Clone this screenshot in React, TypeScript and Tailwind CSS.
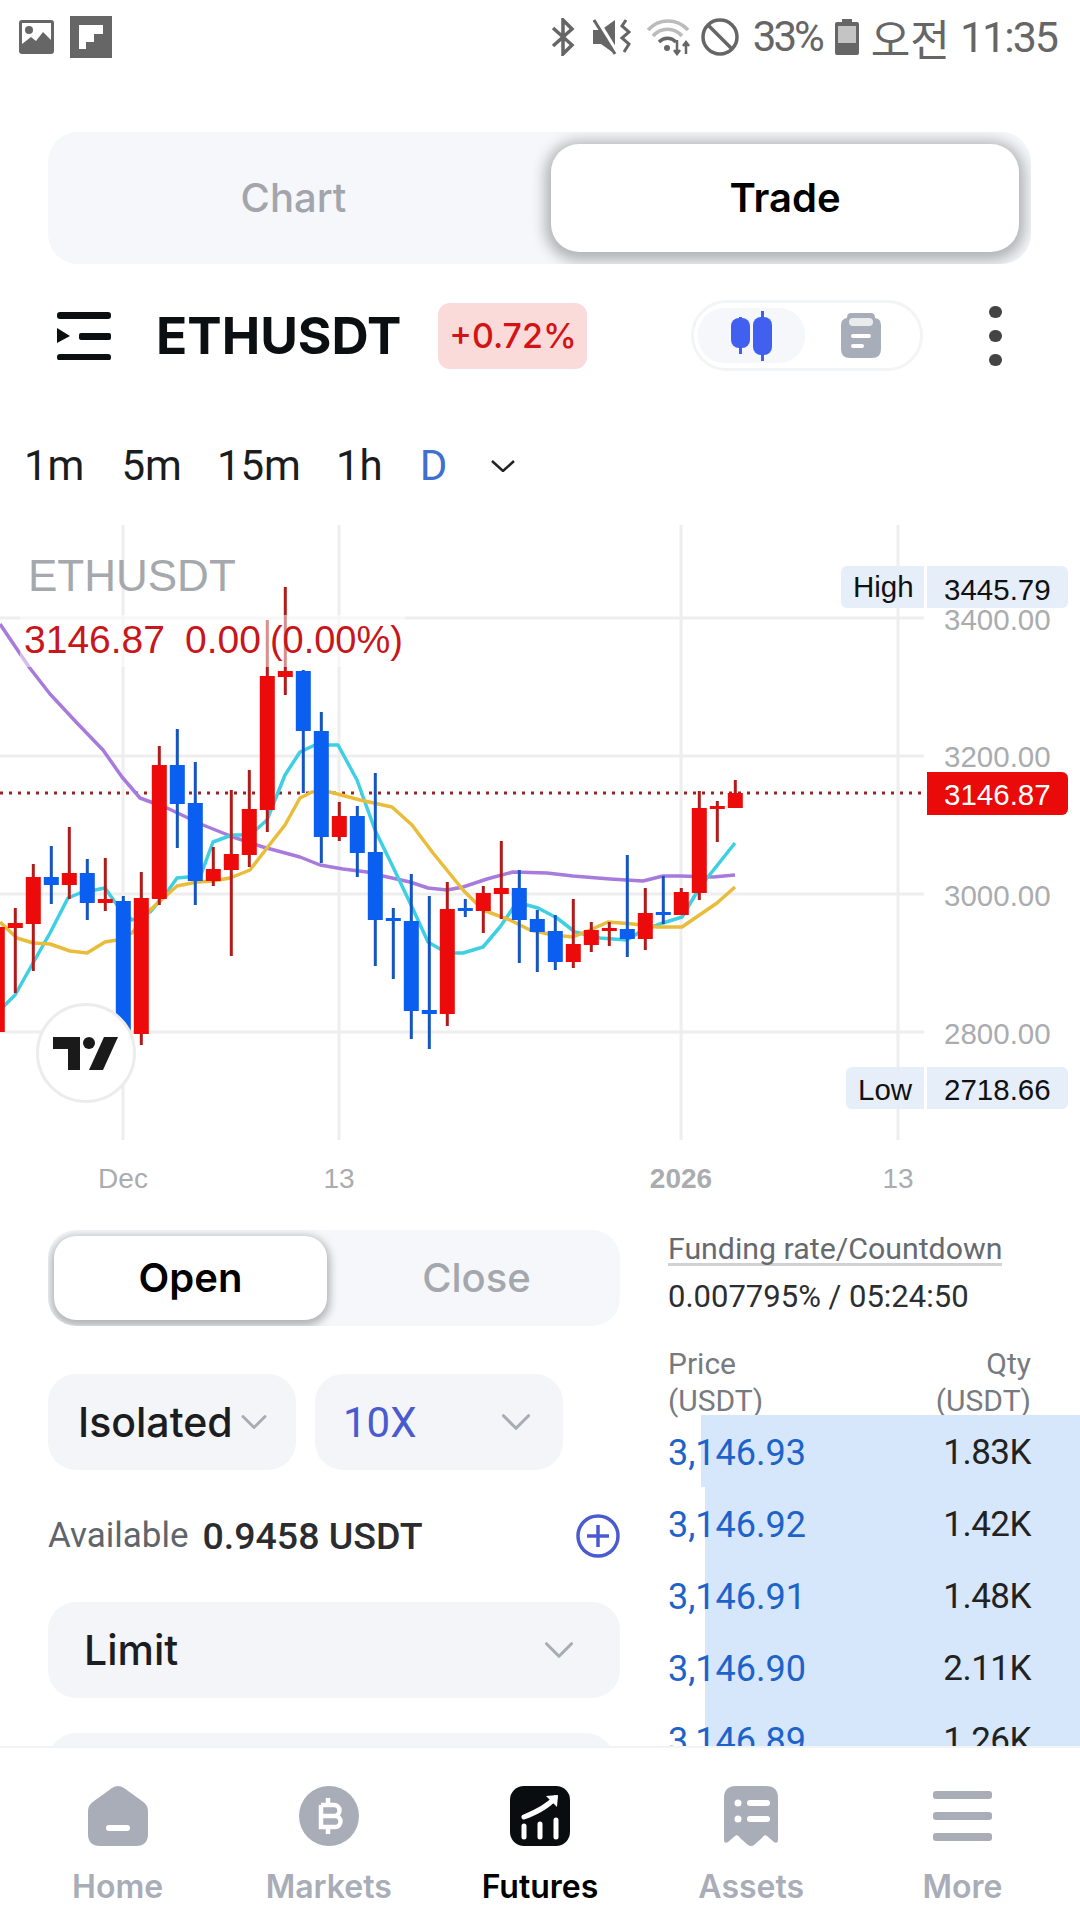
import { ChevronDown } from 'lucide-react';

// x, wickTop, wickBottom, bodyTop, bodyBottom, up
type Candle = [number, number, number, number, number, boolean];

const candles: Candle[] = [
  [-2.7, 927, 1032, 927, 1032, true],
  [15.3, 908, 993, 923, 928, true],
  [33.3, 864, 971, 877, 924, true],
  [51.3, 846, 904, 877, 885, false],
  [69.3, 827, 899, 873, 885, true],
  [87.3, 859, 920, 873, 903, false],
  [105.3, 858, 911, 899, 903, true],
  [123.3, 896, 1040, 901, 1040, false],
  [141.3, 872, 1045, 898, 1034, true],
  [159.3, 746, 905, 765, 899, true],
  [177.3, 729, 848, 765, 804, false],
  [195.3, 762, 905, 803, 881, false],
  [213.3, 847, 886, 869, 881, true],
  [231.3, 790, 956, 854, 870, true],
  [249.3, 770, 867, 809, 855, true],
  [267.3, 620, 832, 676, 810, true],
  [285.3, 587, 695, 671, 677, true],
  [303.3, 670, 793, 671, 731, false],
  [321.3, 712, 863, 731, 837, false],
  [339.3, 802, 841, 816, 837, true],
  [357.3, 806, 877, 816, 853, false],
  [375.3, 773, 966, 852, 920, false],
  [393.3, 908, 979, 918, 921, false],
  [411.3, 874, 1039, 921, 1011, false],
  [429.3, 896, 1049, 1010, 1014, false],
  [447.3, 882, 1026, 909, 1014, true],
  [465.3, 899, 917, 908, 911, false],
  [483.3, 886, 933, 893, 911, true],
  [501.3, 841, 919, 888, 894, true],
  [519.3, 870, 963, 888, 920, false],
  [537.3, 910, 972, 919, 932, false],
  [555.3, 915, 970, 931, 962, false],
  [573.3, 899, 968, 944, 962, true],
  [591.3, 922, 952, 930, 945, true],
  [609.3, 922, 946, 928, 931, true],
  [627.3, 855, 957, 929, 939, false],
  [645.3, 888, 950, 913, 939, true],
  [663.3, 876, 924, 912, 915, false],
  [681.3, 888, 915, 892, 915, true],
  [699.3, 791, 900, 808, 893, true],
  [717.3, 801, 842, 806, 809, true],
  [735.3, 780, 808, 793, 808, true],
];

const purple =
  '0,624 29,667 50,694 77,723 103,750 122,777 140,798 167,808 203,825 233,837 263,847 300,857 320,865 343,869 367,872 383,876 410,882 428,888 447,890 463,887 487,879 513,872 547,873 573,876 610,879 643,881 663,876 680,876 713,877 735,875';
const cyan =
  '0,1010 15,995 33,963 50,933 68,898 80,893 105,888 117,905 132,920 150,912 167,892 177,878 188,877 200,877 213,842 232,835 250,835 267,820 285,775 300,752 315,745 338,745 357,780 375,830 393,867 412,907 428,942 447,953 463,953 483,947 500,927 513,908 527,905 538,908 557,918 575,932 600,938 627,940 643,930 663,923 682,917 700,887 735,843';
const yellow =
  '0,922 17,938 33,943 50,944 70,951 87,953 105,942 117,940 132,933 150,910 177,886 197,882 213,881 230,878 250,870 267,848 285,825 300,798 312,792 330,792 360,800 392,807 412,825 433,853 463,890 483,910 510,920 530,930 553,935 573,937 590,930 608,922 633,924 657,927 682,927 717,903 735,887';

const asks = [
  { price: '3,146.93', qty: '1.83K', bar: 379 },
  { price: '3,146.92', qty: '1.42K', bar: 375 },
  { price: '3,146.91', qty: '1.48K', bar: 375 },
  { price: '3,146.90', qty: '2.11K', bar: 375 },
  { price: '3,146.89', qty: '1.26K', bar: 375 },
];

function StatusBar() {
  return (
    <div className="h-[74px] flex items-center justify-between pl-[19px] pr-[23px] text-[#666] font-[Roboto,sans-serif]">
      <div className="flex items-center gap-[16px]">
        <svg width="35" height="34" viewBox="0 0 35 34">
          <rect width="35" height="34" rx="3" fill="#666" />
          <rect x="3" y="3" width="29" height="28" fill="#fff" />
          <circle cx="10" cy="10" r="4" fill="#666" />
          <path d="M3 28 L3 24 L12 17 L17 21 L24 12 L32 20 L32 31 L3 31Z" fill="#666" />
        </svg>
        <svg width="42" height="42" viewBox="0 0 42 42">
          <rect width="42" height="42" fill="#666" />
          <path d="M9 9H33V18H24V26H16V33H9Z" fill="#fff" />
        </svg>
      </div>
      <div className="flex items-center">
        <svg width="24" height="38" viewBox="0 0 24 38" fill="none" stroke="#666" strokeWidth="3.5">
          <path d="M2 10 L21 27 L12 36 V2 L21 11 L2 28" />
        </svg>
        <svg className="ml-[18px]" width="38" height="36" viewBox="0 0 38 36">
          <path d="M0 11H8L22 1V35L8 25H0Z" fill="#666" />
          <path d="M3 0 L25 36" stroke="#fff" strokeWidth="5" />
          <path d="M1 1 L22 35" stroke="#666" strokeWidth="3" />
          <path d="M33 1 L29 7 L36 13 L29 19 L36 25 L31 33" fill="none" stroke="#666" strokeWidth="3" />
        </svg>
        <svg className="ml-[16px]" width="44" height="38" viewBox="0 0 44 38" fill="none" strokeWidth="3.5">
          <path d="M1 12 C12 0 30 0 41 12" stroke="#bbb" />
          <path d="M6 18 C14 9 27 9 35 18" stroke="#bbb" />
          <path d="M12 24 C17 19 24 19 29 24" stroke="#666" />
          <circle cx="20" cy="30" r="3" fill="#666" stroke="none" />
          <path d="M30 22 V36 M27 32 L30 36 L33 32 M39 36 V24 M36 28 L39 24 L42 28" stroke="#666" strokeWidth="2.5" />
        </svg>
        <svg className="ml-[10px]" width="38" height="38" viewBox="0 0 38 38" fill="none" stroke="#666" strokeWidth="3.5">
          <circle cx="19" cy="19" r="17" />
          <path d="M7 7 L31 31" />
        </svg>
        <span className="ml-[14px] text-[42px] leading-none tracking-[-3px]">33%</span>
        <svg className="ml-[13px]" width="24" height="36" viewBox="0 0 24 36">
          <path d="M7 0H17V3H22Q24 3 24 5V34Q24 36 22 36H2Q0 36 0 34V5Q0 3 2 3H7Z" fill="#666" />
          <rect x="3" y="7" width="18" height="17" fill="#c4c4c4" />
        </svg>
        <span className="ml-[12px] text-[43px] leading-none font-['Noto_Sans_CJK_KR',sans-serif]">오전</span>
        <span className="ml-[10px] text-[43px] leading-none tracking-[-2px]">11:35</span>
      </div>
    </div>
  );
}

function MainTabs() {
  return (
    <div className="mt-[58px] mx-[48px] w-[983px] h-[132px] rounded-[30px] bg-[#f5f7fa] overflow-hidden flex items-center">
      <div className="w-[491px] mr-[12px] text-center text-[40px] font-medium text-[#a2a6ac]">Chart</div>
      <div className="w-[468px] h-[108px] rounded-[28px] bg-white flex items-center justify-center text-[40px] font-semibold text-black shadow-[0_3px_14px_6px_rgba(0,0,0,0.28)]">
        Trade
      </div>
    </div>
  );
}

function Header() {
  return (
    <div className="mt-[36px] h-[71px] flex items-center relative">
      <svg className="ml-[57px]" width="54" height="48" viewBox="0 0 54 48" fill="#0c0f12">
        <rect width="54" height="7" rx="3" />
        <rect x="22" y="21" width="32" height="7" rx="2" />
        <path d="M0 16 L13 24 L0 31Z" />
        <rect y="42" width="54" height="6.5" rx="3" />
      </svg>
      <span className="ml-[45px] text-[51.5px] leading-none font-bold text-[#0c0f12]">ETHUSDT</span>
      <span className="ml-[37px] w-[149px] h-[66px] rounded-[12px] bg-[#fbdada] flex items-center justify-center text-[34px] font-medium text-[#d21414]">
        +0.72%
      </span>
      <div className="ml-[104px] w-[232px] h-[71px] rounded-[36px] border-[3px] border-[#f3f4f6] flex items-center pl-[4px]">
        <div className="w-[107px] h-[55px] rounded-[26px] bg-[#f5f7fb] flex items-center justify-center">
          <svg width="42" height="50" viewBox="0 0 42 50" fill="#4160f0">
            <rect x="0" y="7" width="19" height="30" rx="8" />
            <rect x="8" y="6" width="3" height="37" />
            <rect x="22" y="6" width="19" height="38" rx="8" />
            <rect x="30" y="0" width="3" height="50" />
          </svg>
        </div>
        <svg className="ml-[36px]" width="40" height="45" viewBox="0 0 40 45">
          <path d="M10 0H30Q34 0 34 5 Q40 6 40 12V36Q40 45 31 45H9Q0 45 0 36V12Q0 6 6 5 Q6 0 10 0Z" fill="#a8aeb9" />
          <rect x="8" y="5" width="24" height="8" rx="4" fill="#fff" opacity="0.75" />
          <rect x="10" y="21" width="20" height="4" rx="2" fill="#fff" />
          <rect x="10" y="31" width="13" height="4" rx="2" fill="#fff" />
        </svg>
      </div>
      <div className="ml-[66px] flex flex-col gap-[12px]">
        <span className="w-[13px] h-[12px] rounded-full bg-[#444]" />
        <span className="w-[13px] h-[12px] rounded-full bg-[#444]" />
        <span className="w-[13px] h-[12px] rounded-full bg-[#444]" />
      </div>
    </div>
  );
}

function Timeframes() {
  return (
    <div className="h-[154px] pt-[36px] flex items-center pl-[24px] text-[42px] leading-none text-[#1a1c1e] font-[Roboto,sans-serif]">
      <span>1m</span>
      <span className="ml-[37px]">5m</span>
      <span className="ml-[35px]">15m</span>
      <span className="ml-[35px]">1h</span>
      <span className="ml-[37px] text-[#3f6fd1]">D</span>
      <svg className="ml-[44px]" width="24" height="12" viewBox="0 0 24 12" fill="none" stroke="#222" strokeWidth="2.5">
        <path d="M1 1 L12 11 L23 1" />
      </svg>
    </div>
  );
}

function Chart() {
  return (
    <div className="relative h-[685px] font-['Liberation_Sans',sans-serif]">
      <svg className="block" width="1080" height="685" viewBox="0 525 1080 685">
        <g stroke="#eeeeee" strokeWidth="3">
          <path d="M0 618H924M0 756H924M0 894H924M0 1032H924" />
          <path d="M123 525V1140M339 525V1140M681 525V1140M898 525V1140" />
        </g>
        <path d="M0 793H924" stroke="#9c2222" strokeWidth="3" strokeDasharray="3 6" />
        <g fill="none" strokeWidth="3.5" strokeLinejoin="round">
          <polyline points={purple} stroke="#a77bdc" />
          <polyline points={cyan} stroke="#3ed0e2" />
          <polyline points={yellow} stroke="#e9bc3a" />
        </g>
        {candles.map(([x, wt, wb, bt, bb, up]) => (
          <g key={x}>
            <rect x={x - 1.5} y={wt} width="3" height={wb - wt} fill={up ? '#b01c1c' : '#1555c0'} />
            <rect x={x - 7.5} y={bt} width="15" height={bb - bt} fill={up ? '#ec0a0a' : '#0a5ef0'} />
          </g>
        ))}
      </svg>

      {/* legend, with the faded strip it sits on */}
      <div className="absolute left-[20px] top-[90px] w-[385px] h-[52px] bg-white/50" />
      <span className="absolute left-[28px] top-[26px] text-[44px] leading-[50px] text-[#a5a8ac]">ETHUSDT</span>
      <div className="absolute left-[24px] top-[93px] flex text-[39px] leading-[44px] text-[#c8161a]">
        <span>3146.87</span>
        <span className="ml-[20px]">0.00</span>
        <span className="ml-[9px] text-[38px]">(0.00%)</span>
      </div>

      {/* price axis */}
      <span className="absolute left-[944px] top-[77px] text-[29.5px] leading-[36px] text-[#aaacaf]">3400.00</span>
      <span className="absolute left-[944px] top-[214px] text-[29.5px] leading-[36px] text-[#aaacaf]">3200.00</span>
      <span className="absolute left-[944px] top-[353px] text-[29.5px] leading-[36px] text-[#aaacaf]">3000.00</span>
      <span className="absolute left-[944px] top-[491px] text-[29.5px] leading-[36px] text-[#aaacaf]">2800.00</span>

      <div className="absolute left-[841px] top-[41px] flex gap-[3px] h-[42px] text-[29.5px] leading-[42px] text-[#111]">
        <span className="w-[83px] rounded-l-[6px] bg-[#e6eef9] pl-[12px]">High</span>
        <span className="w-[141px] rounded-r-[6px] bg-[#e6eef9] pl-[17px] pt-[3px]">3445.79</span>
      </div>
      <div className="absolute left-[846px] top-[542px] flex gap-[3px] h-[42px] text-[29.5px] leading-[42px] text-[#111]">
        <span className="w-[78px] rounded-l-[6px] bg-[#e6eef9] pl-[12px] pt-[2px]">Low</span>
        <span className="w-[141px] rounded-r-[6px] bg-[#e6eef9] pl-[17px] pt-[2px]">2718.66</span>
      </div>
      <div className="absolute left-[927px] top-[247px] w-[141px] h-[43px] rounded-r-[6px] bg-[#ea0a0a] pl-[17px] text-[29.5px] leading-[45px] text-white">
        3146.87
      </div>

      {/* time axis */}
      <span className="absolute left-[98px] top-[636px] w-[50px] text-center text-[28px] leading-[36px] text-[#aaacaf]">Dec</span>
      <span className="absolute left-[314px] top-[636px] w-[50px] text-center text-[28px] leading-[36px] text-[#aaacaf]">13</span>
      <span className="absolute left-[646px] top-[636px] w-[70px] text-center text-[28px] leading-[36px] font-bold text-[#aaacaf]">2026</span>
      <span className="absolute left-[873px] top-[636px] w-[50px] text-center text-[28px] leading-[36px] text-[#aaacaf]">13</span>

      {/* tradingview badge */}
      <div className="absolute left-[36px] top-[478px] w-[100px] h-[100px] rounded-full bg-white border-[3px] border-[#ececec] flex items-center justify-center">
        <svg width="66" height="33" viewBox="0 0 66 33" fill="#1a1a1a">
          <path d="M0 0H27V33H15V12H0Z" />
          <circle cx="36" cy="6" r="6" />
          <path d="M51 0H65L50 33H36Z" />
        </svg>
      </div>
    </div>
  );
}

function OpenClose() {
  return (
    <div className="w-[572px] h-[96px] rounded-[28px] bg-[#f5f7fa] overflow-hidden flex items-center pl-[6px]">
      <div className="w-[273px] h-[84px] rounded-[22px] bg-white flex items-center justify-center text-[40px] font-semibold text-black shadow-[0_3px_8px_3px_rgba(0,0,0,0.28)]">
        Open
      </div>
      <div className="flex-1 pl-[6px] text-center text-[40px] font-medium text-[#a4a8ae]">Close</div>
    </div>
  );
}

function OrderForm() {
  return (
    <div className="w-[620px] pl-[48px] pt-[20px]">
      <OpenClose />
      <div className="mt-[48px] flex gap-[19px]">
        <div className="w-[248px] h-[96px] rounded-[28px] bg-[#f3f5f8] flex items-center pl-[30px] text-[41px] font-medium text-[#1b1d20]">
          <span className="pt-[2px]">Isolated</span>
          <ChevronDown className="-ml-[1px] w-[44px] h-[44px] text-[#a8adb5]" strokeWidth={1.6} />
        </div>
        <div className="w-[248px] h-[96px] rounded-[28px] bg-[#f3f5f8] flex items-center justify-between pl-[28px] pr-[22px] text-[42px] text-[#4a5bd0] font-[Roboto,sans-serif]">
          <span>10X</span>
          <ChevronDown className="w-[50px] h-[50px] text-[#a8adb5]" strokeWidth={1.5} />
        </div>
      </div>
      <div className="mt-[44px] h-[44px] flex items-center font-[Roboto,sans-serif]">
        <span className="text-[35px] text-[#60656b]">Available</span>
        <span className="ml-[14px] text-[37.5px] font-medium text-[#2a2c2f]">0.9458 USDT</span>
        <svg className="ml-auto" width="44" height="44" viewBox="0 0 44 44" fill="none" stroke="#4a5bd0" strokeWidth="3.5">
          <circle cx="22" cy="22" r="20" />
          <path d="M22 11V33M11 22H33" />
        </svg>
      </div>
      <div className="mt-[44px] w-[572px] h-[96px] rounded-[28px] bg-[#f3f5f8] flex items-center justify-between pl-[36px] pr-[36px] text-[41px] font-medium text-[#1b1d20]">
        <span className="pt-[2px]">Limit</span>
        <ChevronDown className="w-[50px] h-[50px] text-[#a8adb5]" strokeWidth={1.5} />
      </div>
      <div className="mt-[35px] w-[566px] h-[96px] rounded-[28px] bg-[#f3f5f8]" />
    </div>
  );
}

function OrderBook() {
  return (
    <div className="ml-[48px] w-[412px] pt-[23px] font-[Roboto,sans-serif]">
      <div className="pr-[49px]">
        <span className="inline-block h-[33px] border-b-[3px] border-[#cfd1d4] text-[30.3px] leading-[31px] text-[#666a70] whitespace-nowrap">
          Funding rate/Countdown
        </span>
        <div className="mt-[13px] text-[31px] leading-[36px] text-[#2c2e31] whitespace-nowrap">0.007795% / 05:24:50</div>
        <div className="mt-[30px] flex justify-between text-[30px] leading-[37px] text-[#777b80]">
          <span>
            Price
            <br />
            (USDT)
          </span>
          <span className="text-right">
            Qty
            <br />
            (USDT)
          </span>
        </div>
      </div>
      <div className="-mt-[4px]">
        {asks.map((row) => (
          <div key={row.price} className="relative h-[72px] pt-[4px] flex items-center justify-between pr-[49px] text-[36px]">
            <div className="absolute right-0 top-0 bottom-0 bg-[#d6e6fb]" style={{ width: row.bar }} />
            <span className="relative text-[#1d63c9]">{row.price}</span>
            <span className="relative text-[35px] tracking-[-0.5px] text-[#222]">{row.qty}</span>
          </div>
        ))}
      </div>
    </div>
  );
}

function NavItem({ label, active, children }: { label: string; active?: boolean; children: React.ReactNode }) {
  return (
    <div className="flex flex-col items-center">
      <div className="h-[60px] flex items-center">{children}</div>
      <span className={active ? 'mt-[23px] text-[32px] leading-[36px] font-semibold text-black' : 'mt-[23px] text-[32px] leading-[36px] font-semibold text-[#a8adb7]'}>
        {label}
      </span>
    </div>
  );
}

function BottomNav() {
  return (
    <div className="h-[174px] shrink-0 bg-white border-t-[2px] border-[#f2f3f5] pt-[38px] px-[12px] grid grid-cols-5 relative">
      <NavItem label="Home">
        <svg width="60" height="60" viewBox="0 0 60 60">
          <path d="M24 2 Q30 -2 36 2 L54 15 Q60 19 60 25 V48 Q60 60 48 60 H12 Q0 60 0 48 V25 Q0 19 6 15Z" fill="#a8adb7" />
          <rect x="18" y="39" width="24" height="6" rx="3" fill="#fff" />
        </svg>
      </NavItem>
      <NavItem label="Markets">
        <svg width="60" height="60" viewBox="0 0 60 60">
          <circle cx="30" cy="30" r="30" fill="#a8adb7" />
          <path d="M22 19H35A5.5 5.5 0 0 1 35 30H22M22 30H36A5.5 5.5 0 0 1 36 41H22V19M29 12V19M29 41V48" fill="none" stroke="#fff" strokeWidth="4.5" />
        </svg>
      </NavItem>
      <NavItem label="Futures" active>
        <svg width="60" height="60" viewBox="0 0 60 60">
          <rect width="60" height="60" rx="14" fill="#0a0d10" />
          <path d="M14 31 C24 27 36 22 45 12" fill="none" stroke="#fff" strokeWidth="5" strokeLinecap="round" />
          <path d="M36 10 L48 9 L47 21Z" fill="#fff" />
          <path d="M14 40V51M30 38V51M46 34V51" stroke="#fff" strokeWidth="5" strokeLinecap="round" />
        </svg>
      </NavItem>
      <NavItem label="Assets">
        <svg width="54" height="60" viewBox="0 0 54 60">
          <path d="M0 12 Q0 0 12 0 H42 Q54 0 54 12 V54 Q54 58 50 56 L43 50 Q40 48 38 52 L30 59 Q27 61 24 59 L16 52 Q14 48 11 50 L4 56 Q0 58 0 54Z" fill="#a8adb7" />
          <circle cx="14" cy="17" r="3.5" fill="#fff" />
          <circle cx="14" cy="33" r="3.5" fill="#fff" />
          <rect x="23" y="14" width="23" height="6" rx="3" fill="#fff" />
          <rect x="23" y="30" width="23" height="6" rx="3" fill="#fff" />
        </svg>
      </NavItem>
      <NavItem label="More">
        <svg width="59" height="60" viewBox="0 0 59 60" fill="#a8adb7">
          <rect y="5" width="59" height="8" rx="3" />
          <rect y="26" width="59" height="8" rx="3" />
          <rect y="47" width="59" height="8" rx="3" />
        </svg>
      </NavItem>
    </div>
  );
}

export default function App() {
  return (
    <div className="w-[1080px] h-[1920px] overflow-hidden bg-white flex flex-col font-[Inter,sans-serif]">
      <StatusBar />
      <MainTabs />
      <Header />
      <Timeframes />
      <Chart />
      <div className="flex-1 min-h-0 overflow-hidden flex">
        <OrderForm />
        <OrderBook />
      </div>
      <BottomNav />
    </div>
  );
}
